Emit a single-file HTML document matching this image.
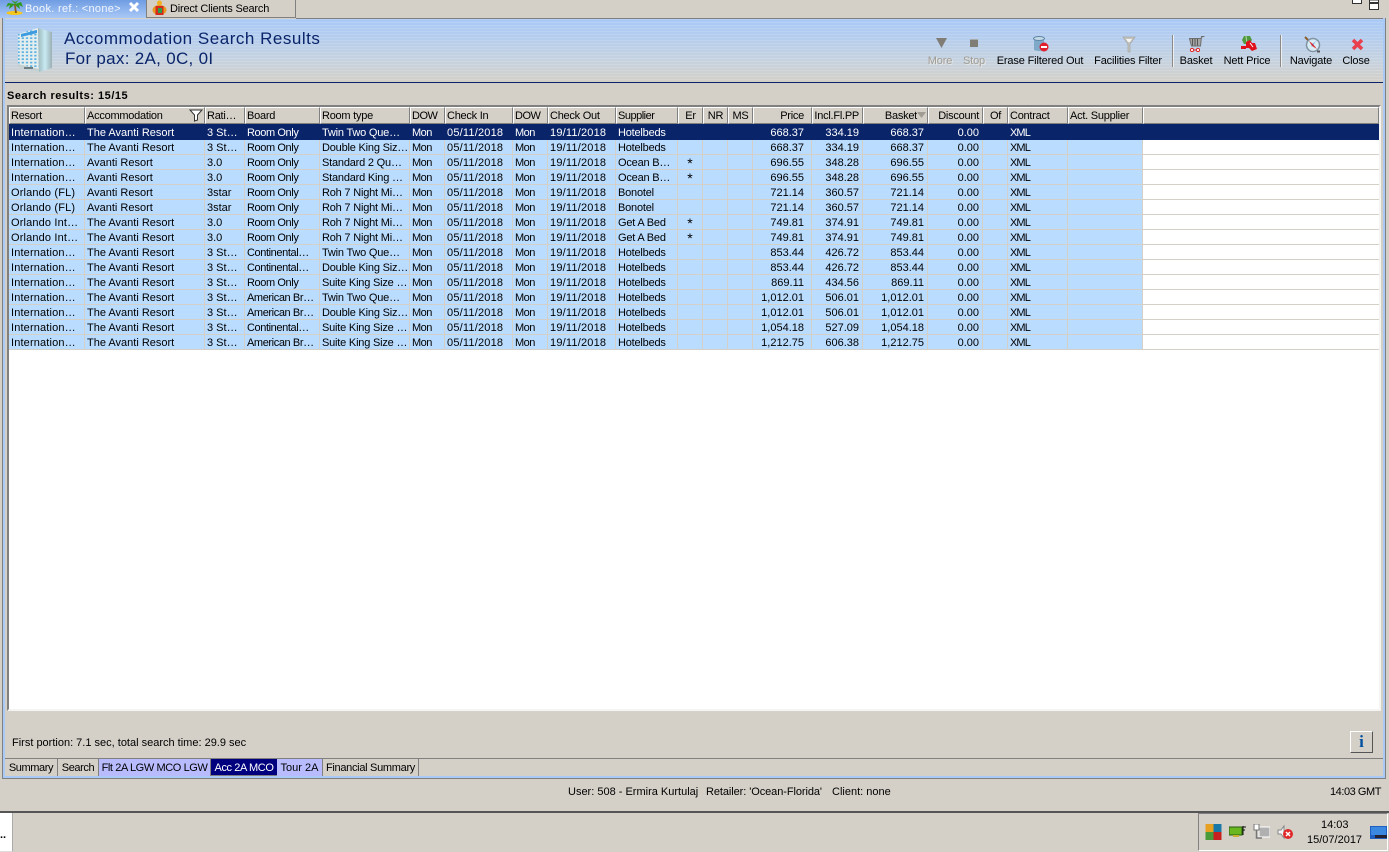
<!DOCTYPE html>
<html><head><meta charset="utf-8"><title>Accommodation Search Results</title>
<style>
html,body{margin:0;padding:0}
body{width:1389px;height:852px;overflow:hidden;background:#d4d0c8;position:relative;font:11px/13px "Liberation Sans",sans-serif;color:#000}
.a{position:absolute;white-space:nowrap}
#hd{left:5px;top:19px;width:1378px;height:63px;background:linear-gradient(#a9c9f6 0,#b3cdf0 25%,#c5d2e0 65%,#d4d0c8 100%)}
#hds{left:5px;top:19px;width:1378px;height:63px;background:repeating-linear-gradient(rgba(255,255,255,.13) 0 1px,rgba(255,255,255,0) 1px 3px)}
.tb{font-size:11px;text-align:center;top:55px;transform:translateX(-50%);letter-spacing:-.15px}
.dis{color:#a09c94;text-shadow:1px 1px 0 #e8e8e8}
table{border-collapse:separate;border-spacing:0;table-layout:fixed;position:absolute}
#h{left:9px;top:107px;width:1370px}
#h th{height:17px;padding:2px 0 0 1px;background:#d4d0c8;font-weight:normal;text-align:left;overflow:hidden;white-space:nowrap;box-sizing:border-box;letter-spacing:-.25px;border-top:1px solid #fff;border-left:1px solid #fff;border-right:1px solid #808080;border-bottom:1px solid #808080}
#g{left:9px;top:125px;width:1370px}
#g td{height:15px;box-sizing:border-box;padding:3px 0 0 2px;line-height:11px;background:#badcff;overflow:hidden;white-space:nowrap;border-right:1px solid #d4d0c8;border-bottom:1px solid #d4d0c8}
#g td:last-child{background:#fff;border-right:0}
#g tr.s td{background:#0a246a;color:#fff;border-color:#0a246a}
#g td:nth-child(n+14):nth-child(-n+17),#h th:nth-child(n+14):nth-child(-n+17){text-align:right;padding-right:3px;padding-left:0}
#g td:nth-child(14),#h th:nth-child(14){padding-right:7px !important}
#h th:nth-child(16){padding-right:10px !important}
#g td:nth-child(11),#h th:nth-child(11),#h th:nth-child(12),#h th:nth-child(13),#h th:nth-child(18){text-align:center;padding-left:0}
#g td:nth-child(1){letter-spacing:.15px}
#g td:nth-child(4){letter-spacing:-.4px}
#g td:nth-child(5){letter-spacing:-.2px}
#g td:nth-child(6),#g td:nth-child(8){letter-spacing:-.5px}
#g td:nth-child(7),#g td:nth-child(9){letter-spacing:.2px}
#g td:nth-child(10){letter-spacing:-.2px}
#g td:nth-child(11){font-size:14px;padding-top:2px}
#g td:nth-child(19){letter-spacing:-.9px}
#h th:nth-child(6),#h th:nth-child(8),#h th:nth-child(10){letter-spacing:-.5px}
.t{top:759px;height:17px;line-height:19px;box-sizing:border-box;text-align:center;border-right:1px solid #808080;letter-spacing:-.4px}
</style></head><body>

<!-- top tabs -->
<div class="a" style="left:0;top:0;width:146px;height:18px;background:linear-gradient(#6f9ce2,#a9c9f6)"></div>
<div class="a" style="left:25px;top:3px;color:#f2f6ff;letter-spacing:.3px">Book. ref.: &lt;none&gt;</div>
<svg class="a" style="left:5px;top:0" width="18" height="16" viewBox="0 0 18 16"><ellipse cx="9.500" cy="13" rx="8" ry="2" fill="#f5c71a"/><path d="M9 4 L10 13 L12 13 L10.500 4Z" fill="#8a5a1a"/><path d="M10 4 L3 3 L1 7 L5 5 L4 9 L8 6 L10 4 L16 2 L18 7 L14 5 L15 9 L11 6Z M10 4 L6 0 L10 2 L14 0Z" fill="#2f9a1c"/></svg>
<svg class="a" style="left:128px;top:1px" width="12" height="12" viewBox="0 0 12 12"><path d="M2 2 L10 10 M10 2 L2 10" stroke="#fff" stroke-width="3"/></svg>
<div class="a" style="left:146px;top:0;width:150px;height:18px;box-sizing:border-box;border-left:1px solid #808080;border-right:1px solid #808080;border-bottom:1px solid #808080"></div>
<div class="a" style="left:170px;top:3px;letter-spacing:-.2px">Direct Clients Search</div>
<svg class="a" style="left:152px;top:0" width="15" height="16" viewBox="0 0 15 16"><circle cx="7.500" cy="3" r="2.500" fill="#f0b020"/><ellipse cx="7.500" cy="10" rx="7" ry="5" fill="#e89a20"/><rect x="3.500" y="6" width="8" height="9" fill="#d62a1c"/><rect x="6" y="8" width="4" height="5" fill="#2f9a4c"/></svg>
<div class="a" style="left:296px;top:18px;width:1090px;height:1px;background:#808080"></div>
<svg class="a" style="left:1351px;top:0" width="32" height="11" viewBox="0 0 32 11"><path d="M1.500 0V3.500H10.500V0" fill="#fff" stroke="#333"/><rect x="18.500" y="0" width="9" height="9.500" fill="#fff" stroke="#333"/><rect x="18" y="2" width="10" height="2" fill="#333"/></svg>

<!-- panel frame -->
<div class="a" style="left:2px;top:18px;width:1px;height:761px;background:#808080"></div>
<div class="a" style="left:3px;top:18px;width:2px;height:760px;background:#a9c9f6"></div>
<div class="a" style="left:1383px;top:18px;width:2px;height:760px;background:#a9c9f6"></div>
<div class="a" style="left:1385px;top:18px;width:1px;height:761px;background:#808080"></div>
<div class="a" style="left:3px;top:776px;width:1382px;height:2px;background:#a9c9f6"></div>
<div class="a" style="left:2px;top:778px;width:1384px;height:1px;background:#808080"></div>

<!-- header band -->
<div class="a" id="hd"></div><div class="a" id="hds"></div>
<div class="a" style="left:5px;top:82px;width:1378px;height:1px;background:#0a246a"></div>
<svg class="a" style="left:16px;top:26px" width="38" height="48" viewBox="0 0 38 48">
<defs><pattern id="w" width="4.200" height="3.500" patternUnits="userSpaceOnUse"><rect width="4.200" height="3.500" fill="#e4eeee"/><rect x="1.500" y=".8" width="2.200" height="1.700" fill="#5ab0e0"/></pattern><linearGradient id="rf" x1="0" x2="1" y1="0" y2="0"><stop offset="0" stop-color="#9cb8bc"/><stop offset=".5" stop-color="#c8eaf2"/><stop offset="1" stop-color="#9ab0b4"/></linearGradient></defs>
<path d="M2 8 L22 2 L23 46 L2 41Z" fill="url(#w)"/><path d="M22 2 L36 6 L36 42 L23 46Z" fill="url(#rf)"/><path d="M5 8 L21 4 L21 7 L5 11Z" fill="#3d9be0"/><path d="M2 38 L23 43 L23 46 L2 41Z" fill="#c4d0d0"/><rect x="8" y="41" width="9" height="2" fill="#6d7d80"/></svg>
<div class="a" style="left:64px;top:29px;font-size:17px;line-height:19px;color:#0a246a;letter-spacing:.52px">Accommodation Search Results</div>
<div class="a" style="left:65px;top:49px;font-size:17px;line-height:19px;color:#0a246a;letter-spacing:.3px">For pax: 2A, 0C, 0I</div>

<!-- toolbar -->
<svg class="a" style="left:936px;top:38px" width="11" height="10" viewBox="0 0 11 10"><path d="M0 0H11L5.500 10Z" fill="#807c76"/></svg>
<div class="a" style="left:970px;top:39px;width:8px;height:7px;background:#807c76;border-top:1px solid #aaa"></div>
<svg class="a" style="left:1033px;top:36px" width="17" height="17" viewBox="0 0 17 17"><path d="M1 2.500V14Q7 16 11 14V2.500Z" fill="#7fa9c9"/><ellipse cx="6" cy="2.500" rx="5.500" ry="2" fill="#c4d9e6" stroke="#5f87a8"/><circle cx="11" cy="11" r="4.500" fill="#e0202c"/><rect x="8" y="10" width="6" height="2" fill="#fff"/></svg>
<svg class="a" style="left:1122px;top:36px" width="14" height="17" viewBox="0 0 14 17"><path d="M1 1H13L8 8V16H6V8Z" fill="#c4c4c0" stroke="#a8a8a2" stroke-width=".8"/><path d="M4 3H10L8 6H6Z" fill="#f4f4f2"/></svg>
<div class="a" style="left:1172px;top:35px;width:1px;height:32px;background:#8a8a8a;border-right:1px solid #eee"></div>
<svg class="a" style="left:1189px;top:36px" width="16" height="16" viewBox="0 0 16 16"><path d="M15.500 .5H12.500L11.500 10H2.500L.5 2.500H12" fill="#a5a5a5" stroke="#6e6e6e"/><path d="M3.500 3V9.500M6 3V9.500M8.500 3V9.500" stroke="#555"/><circle cx="3" cy="14" r="1.600" fill="#fff" stroke="#e02020"/><circle cx="9" cy="14" r="1.600" fill="#fff" stroke="#e02020"/><path d="M4.500 14H7.500" stroke="#e02020"/></svg>
<svg class="a" style="left:1241px;top:36px" width="16" height="16" viewBox="0 0 16 16"><path d="M3 0H9L11 4L8 8H3L1 4Z" fill="#4f9a3e"/><path d="M5 0L6 8" stroke="#b8d8a8"/><path d="M5 6L9 4L11 7L14 7L16 13L11 15L8 12L5 12Z" fill="#e0101c"/><rect x="0" y="10" width="5" height="3" fill="#e0101c"/><path d="M9 7L12 11" stroke="#fff"/></svg>
<div class="a" style="left:1280px;top:35px;width:1px;height:32px;background:#8a8a8a;border-right:1px solid #eee"></div>
<svg class="a" style="left:1304px;top:36px" width="17" height="17" viewBox="0 0 17 17"><circle cx="9" cy="9" r="6.500" fill="#d8ecf6" stroke="#7f93a3" stroke-width="1.500"/><path d="M5 5L9 8L13 13L8 10Z" fill="#e03030"/><path d="M13 4L9 8L7 11Z" fill="#2050c0"/><path d="M1 1L4 4" stroke="#8a6030" stroke-width="2"/><path d="M13 15.500L16 15.500" stroke="#555" stroke-width="2"/></svg>
<svg class="a" style="left:1351px;top:38px" width="13" height="13" viewBox="0 0 13 13"><path d="M2 2L11 11M11 2L2 11" stroke="#e8404c" stroke-width="3.500"/></svg>
<div class="a tb dis" style="left:940px">More</div>
<div class="a tb dis" style="left:974px">Stop</div>
<div class="a tb" style="left:1040px">Erase Filtered Out</div>
<div class="a tb" style="left:1128px">Facilities Filter</div>
<div class="a tb" style="left:1196px">Basket</div>
<div class="a tb" style="left:1247px">Nett Price</div>
<div class="a tb" style="left:1311px">Navigate</div>
<div class="a tb" style="left:1356px">Close</div>

<div class="a" style="left:7px;top:90px;font-weight:bold;letter-spacing:.53px">Search results: 15/15</div>

<!-- grid box -->
<div class="a" style="left:7px;top:105px;width:1374px;height:606px;box-sizing:border-box;background:#fff;border-top:2px solid #808080;border-left:2px solid #808080;border-right:2px solid #f4f4f2;border-bottom:2px solid #f4f4f2"></div>

<table id="h"><colgroup><col style="width:76px"><col style="width:120px"><col style="width:40px"><col style="width:75px"><col style="width:90px"><col style="width:35px"><col style="width:68px"><col style="width:35px"><col style="width:68px"><col style="width:62px"><col style="width:25px"><col style="width:25px"><col style="width:25px"><col style="width:59px"><col style="width:51px"><col style="width:65px"><col style="width:55px"><col style="width:25px"><col style="width:60px"><col style="width:75px"><col></colgroup>
<tr><th>Resort</th><th>Accommodation</th><th>Rati…</th><th>Board</th><th>Room type</th><th>DOW</th><th>Check In</th><th>DOW</th><th>Check Out</th><th>Supplier</th><th>Er</th><th>NR</th><th>MS</th><th>Price</th><th>Incl.Fl.PP</th><th>Basket</th><th>Discount</th><th>Of</th><th>Contract</th><th>Act. Supplier</th><th></th></tr></table>
<svg class="a" style="left:189px;top:109px" width="14" height="13" viewBox="0 0 14 13"><path d="M1 1H13L8.500 6V11L5.500 12V6Z" fill="#fff" stroke="#333"/></svg>
<svg class="a" style="left:917px;top:112px" width="9" height="6" viewBox="0 0 9 6"><path d="M0 0H9L4.500 6Z" fill="#a09c94"/></svg>

<div class="a" style="left:9px;top:124px;width:1370px;height:1px;background:#0a246a"></div>
<table id="g"><colgroup><col style="width:76px"><col style="width:120px"><col style="width:40px"><col style="width:75px"><col style="width:90px"><col style="width:35px"><col style="width:68px"><col style="width:35px"><col style="width:68px"><col style="width:62px"><col style="width:25px"><col style="width:25px"><col style="width:25px"><col style="width:59px"><col style="width:51px"><col style="width:65px"><col style="width:55px"><col style="width:25px"><col style="width:60px"><col style="width:75px"><col></colgroup>
<tr class="s"><td>Internation…</td><td>The Avanti Resort</td><td>3 St…</td><td>Room Only</td><td>Twin Two Que…</td><td>Mon</td><td>05/11/2018</td><td>Mon</td><td>19/11/2018</td><td>Hotelbeds</td><td></td><td></td><td></td><td>668.37</td><td>334.19</td><td>668.37</td><td>0.00</td><td></td><td>XML</td><td></td><td></td></tr>
<tr><td>Internation…</td><td>The Avanti Resort</td><td>3 St…</td><td>Room Only</td><td>Double King Siz…</td><td>Mon</td><td>05/11/2018</td><td>Mon</td><td>19/11/2018</td><td>Hotelbeds</td><td></td><td></td><td></td><td>668.37</td><td>334.19</td><td>668.37</td><td>0.00</td><td></td><td>XML</td><td></td><td></td></tr>
<tr><td>Internation…</td><td>Avanti Resort</td><td>3.0</td><td>Room Only</td><td>Standard 2 Qu…</td><td>Mon</td><td>05/11/2018</td><td>Mon</td><td>19/11/2018</td><td>Ocean B…</td><td>*</td><td></td><td></td><td>696.55</td><td>348.28</td><td>696.55</td><td>0.00</td><td></td><td>XML</td><td></td><td></td></tr>
<tr><td>Internation…</td><td>Avanti Resort</td><td>3.0</td><td>Room Only</td><td>Standard King …</td><td>Mon</td><td>05/11/2018</td><td>Mon</td><td>19/11/2018</td><td>Ocean B…</td><td>*</td><td></td><td></td><td>696.55</td><td>348.28</td><td>696.55</td><td>0.00</td><td></td><td>XML</td><td></td><td></td></tr>
<tr><td>Orlando (FL)</td><td>Avanti Resort</td><td>3star</td><td>Room Only</td><td>Roh 7 Night Mi…</td><td>Mon</td><td>05/11/2018</td><td>Mon</td><td>19/11/2018</td><td>Bonotel</td><td></td><td></td><td></td><td>721.14</td><td>360.57</td><td>721.14</td><td>0.00</td><td></td><td>XML</td><td></td><td></td></tr>
<tr><td>Orlando (FL)</td><td>Avanti Resort</td><td>3star</td><td>Room Only</td><td>Roh 7 Night Mi…</td><td>Mon</td><td>05/11/2018</td><td>Mon</td><td>19/11/2018</td><td>Bonotel</td><td></td><td></td><td></td><td>721.14</td><td>360.57</td><td>721.14</td><td>0.00</td><td></td><td>XML</td><td></td><td></td></tr>
<tr><td>Orlando Int…</td><td>The Avanti Resort</td><td>3.0</td><td>Room Only</td><td>Roh 7 Night Mi…</td><td>Mon</td><td>05/11/2018</td><td>Mon</td><td>19/11/2018</td><td>Get A Bed</td><td>*</td><td></td><td></td><td>749.81</td><td>374.91</td><td>749.81</td><td>0.00</td><td></td><td>XML</td><td></td><td></td></tr>
<tr><td>Orlando Int…</td><td>The Avanti Resort</td><td>3.0</td><td>Room Only</td><td>Roh 7 Night Mi…</td><td>Mon</td><td>05/11/2018</td><td>Mon</td><td>19/11/2018</td><td>Get A Bed</td><td>*</td><td></td><td></td><td>749.81</td><td>374.91</td><td>749.81</td><td>0.00</td><td></td><td>XML</td><td></td><td></td></tr>
<tr><td>Internation…</td><td>The Avanti Resort</td><td>3 St…</td><td>Continental…</td><td>Twin Two Que…</td><td>Mon</td><td>05/11/2018</td><td>Mon</td><td>19/11/2018</td><td>Hotelbeds</td><td></td><td></td><td></td><td>853.44</td><td>426.72</td><td>853.44</td><td>0.00</td><td></td><td>XML</td><td></td><td></td></tr>
<tr><td>Internation…</td><td>The Avanti Resort</td><td>3 St…</td><td>Continental…</td><td>Double King Siz…</td><td>Mon</td><td>05/11/2018</td><td>Mon</td><td>19/11/2018</td><td>Hotelbeds</td><td></td><td></td><td></td><td>853.44</td><td>426.72</td><td>853.44</td><td>0.00</td><td></td><td>XML</td><td></td><td></td></tr>
<tr><td>Internation…</td><td>The Avanti Resort</td><td>3 St…</td><td>Room Only</td><td>Suite King Size …</td><td>Mon</td><td>05/11/2018</td><td>Mon</td><td>19/11/2018</td><td>Hotelbeds</td><td></td><td></td><td></td><td>869.11</td><td>434.56</td><td>869.11</td><td>0.00</td><td></td><td>XML</td><td></td><td></td></tr>
<tr><td>Internation…</td><td>The Avanti Resort</td><td>3 St…</td><td>American Br…</td><td>Twin Two Que…</td><td>Mon</td><td>05/11/2018</td><td>Mon</td><td>19/11/2018</td><td>Hotelbeds</td><td></td><td></td><td></td><td>1,012.01</td><td>506.01</td><td>1,012.01</td><td>0.00</td><td></td><td>XML</td><td></td><td></td></tr>
<tr><td>Internation…</td><td>The Avanti Resort</td><td>3 St…</td><td>American Br…</td><td>Double King Siz…</td><td>Mon</td><td>05/11/2018</td><td>Mon</td><td>19/11/2018</td><td>Hotelbeds</td><td></td><td></td><td></td><td>1,012.01</td><td>506.01</td><td>1,012.01</td><td>0.00</td><td></td><td>XML</td><td></td><td></td></tr>
<tr><td>Internation…</td><td>The Avanti Resort</td><td>3 St…</td><td>Continental…</td><td>Suite King Size …</td><td>Mon</td><td>05/11/2018</td><td>Mon</td><td>19/11/2018</td><td>Hotelbeds</td><td></td><td></td><td></td><td>1,054.18</td><td>527.09</td><td>1,054.18</td><td>0.00</td><td></td><td>XML</td><td></td><td></td></tr>
<tr><td>Internation…</td><td>The Avanti Resort</td><td>3 St…</td><td>American Br…</td><td>Suite King Size …</td><td>Mon</td><td>05/11/2018</td><td>Mon</td><td>19/11/2018</td><td>Hotelbeds</td><td></td><td></td><td></td><td>1,212.75</td><td>606.38</td><td>1,212.75</td><td>0.00</td><td></td><td>XML</td><td></td><td></td></tr>
</table>

<!-- bottom of panel -->
<div class="a" style="left:12px;top:737px">First portion: 7.1 sec, total search time: 29.9 sec</div>
<div class="a" style="left:1350px;top:731px;width:23px;height:22px;box-sizing:border-box;border:1px solid;border-color:#fff #555 #555 #fff;background:#d4d0c8;text-align:center;font:bold 17px/19px 'Liberation Serif',serif;color:#0050a0">i</div>
<div class="a" style="left:5px;top:758px;width:1378px;height:1px;background:#808080"></div>
<div class="a t" style="left:5px;width:53px">Summary</div>
<div class="a t" style="left:58px;width:41px">Search</div>
<div class="a t" style="left:99px;width:112px;background:#b8bcff">Flt 2A LGW MCO LGW</div>
<div class="a t" style="left:211px;width:66px;background:#00007f;color:#fff;border:0;border-bottom:1px solid #808080">Acc 2A MCO</div>
<div class="a t" style="left:277px;width:46px;background:#b8bcff;letter-spacing:0">Tour 2A</div>
<div class="a t" style="left:323px;width:96px;letter-spacing:-.3px">Financial Summary</div>

<!-- status -->
<div class="a" style="left:568px;top:786px">User: 508 - Ermira Kurtulaj</div>
<div class="a" style="left:706px;top:786px;letter-spacing:-.08px">Retailer: 'Ocean-Florida'</div>
<div class="a" style="left:832px;top:786px">Client: none</div>
<div class="a" style="right:8px;top:786px;letter-spacing:-.45px">14:03 GMT</div>

<!-- taskbar -->
<div class="a" style="left:0;top:811px;width:1389px;height:2px;background:#555"></div>
<div class="a" style="left:0;top:813px;width:13px;height:39px;box-sizing:border-box;background:#fff;border-right:1px solid #aaa;border-bottom:1px solid #ddd"></div>
<div class="a" style="left:0;top:829px;font-weight:bold">..</div>
<div class="a" style="left:1198px;top:813px;width:190px;height:38px;box-sizing:border-box;border:1px solid;border-color:#808080 #fff #fff #808080"></div>
<svg class="a" style="left:1205px;top:824px" width="17" height="16" viewBox="0 0 16 16"><rect width="8" height="8" fill="#e8a020"/><rect x="8" width="8" height="8" fill="#1878a8"/><rect y="8" width="8" height="8" fill="#4a9a3a"/><rect x="8" y="8" width="8" height="8" fill="#c82020"/></svg>
<svg class="a" style="left:1229px;top:826px" width="17" height="11" viewBox="0 0 17 11"><rect y="1" width="13" height="8" fill="#6ab820" stroke="#2a5a10"/><rect x="4" y="9" width="6" height="2" fill="#c8b030"/><path d="M14 0V9M14 1H17M14 4H16" stroke="#111"/></svg>
<svg class="a" style="left:1253px;top:824px" width="17" height="16" viewBox="0 0 17 16"><rect x="6" y="3" width="11" height="10" fill="#b0b0b0" stroke="#fff"/><rect x="1" y="0" width="5" height="6" fill="#fff" stroke="#777"/><path d="M3.500 6V14H9" fill="none" stroke="#777" stroke-width="1.500"/></svg>
<svg class="a" style="left:1277px;top:825px" width="17" height="15" viewBox="0 0 17 15"><path d="M1 5H4L7 1V13L4 9H1Z" fill="#f4f4f4" stroke="#888"/><circle cx="11" cy="9" r="5" fill="#e02828"/><path d="M9 7L13 11M13 7L9 11" stroke="#fff" stroke-width="1.500"/></svg>
<div class="a" style="left:1321px;top:819px;font-size:11px">14:03</div>
<div class="a" style="left:1307px;top:834px;font-size:11px">15/07/2017</div>
<svg class="a" style="left:1370px;top:826px" width="17" height="13" viewBox="0 0 17 13"><rect width="17" height="13" fill="#1f5fc0"/><rect x="1" y="1" width="15" height="8" fill="#3a88e0"/><rect x="5" y="9" width="12" height="3" fill="#223"/></svg>
</body></html>
